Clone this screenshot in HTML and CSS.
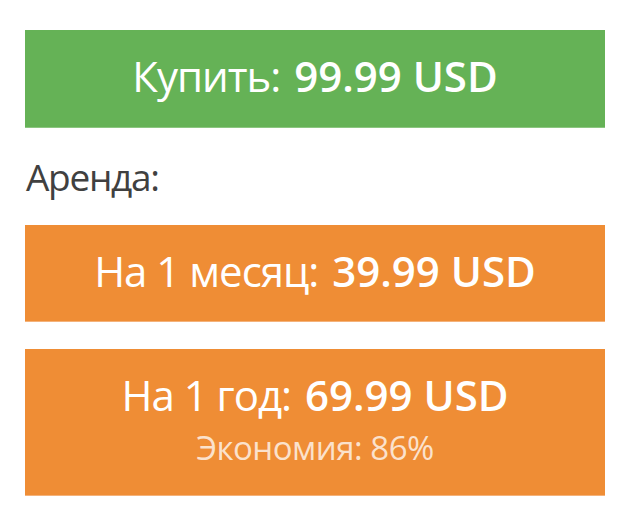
FILE: index.html
```html
<!DOCTYPE html>
<html lang="ru">
<head>
<meta charset="utf-8">
<link rel="stylesheet" href="styles.css">
</head>
<body>
<div class="wrap">
  <div class="btn btn-green"><div class="line">Купить: <b>99.99 USD</b></div></div>
  <div class="label">Аренда:</div>
  <div class="btn btn-orange"><div class="line">На 1 месяц: <b>39.99 USD</b></div></div>
  <div class="btn btn-orange btn-tall">
    <div class="line">На 1 год: <b>69.99 USD</b></div>
    <div class="save">Экономия: 86%</div>
  </div>
</div>
</body>
</html>
```
FILE: styles.css
```css
html, body { margin: 0; padding: 0; background: #fff; }
body { font-family: "Open Sans", "DejaVu Sans", sans-serif; }
.wrap {
  width: 580px;
  padding: 30px 0 0 25px;
  display: flex;
  flex-direction: column;
}
.btn {
  height: 98px;
  box-sizing: border-box;
  display: flex;
  flex-direction: column;
  align-items: center;
  justify-content: center;
  padding-bottom: 5px;
  color: #fff;
}
.btn-green { background: #65b256; border-bottom: 1px solid #8cc680; }
.btn-orange { background: #ef8d35; height: 97px; border-bottom: 1px solid #f4b27a; }
.btn-tall {
  height: 147px;
  margin-top: 27px;
  justify-content: flex-start;
  padding-top: 21px;
  padding-bottom: 0;
}
.line { font-size: 42px; line-height: 50px; letter-spacing: -1px; white-space: nowrap; }
.line b { font-weight: 600; letter-spacing: 0; margin-left: 4px; }
.save {
  font-size: 33px;
  line-height: 56px;
  letter-spacing: -0.5px;
  color: rgba(255, 255, 255, 0.75);
}
.label {
  height: 97px;
  display: flex;
  align-items: center;
  font-size: 37px;
  letter-spacing: -1.3px;
  color: #404040;
  padding-left: 1px;
}
```
